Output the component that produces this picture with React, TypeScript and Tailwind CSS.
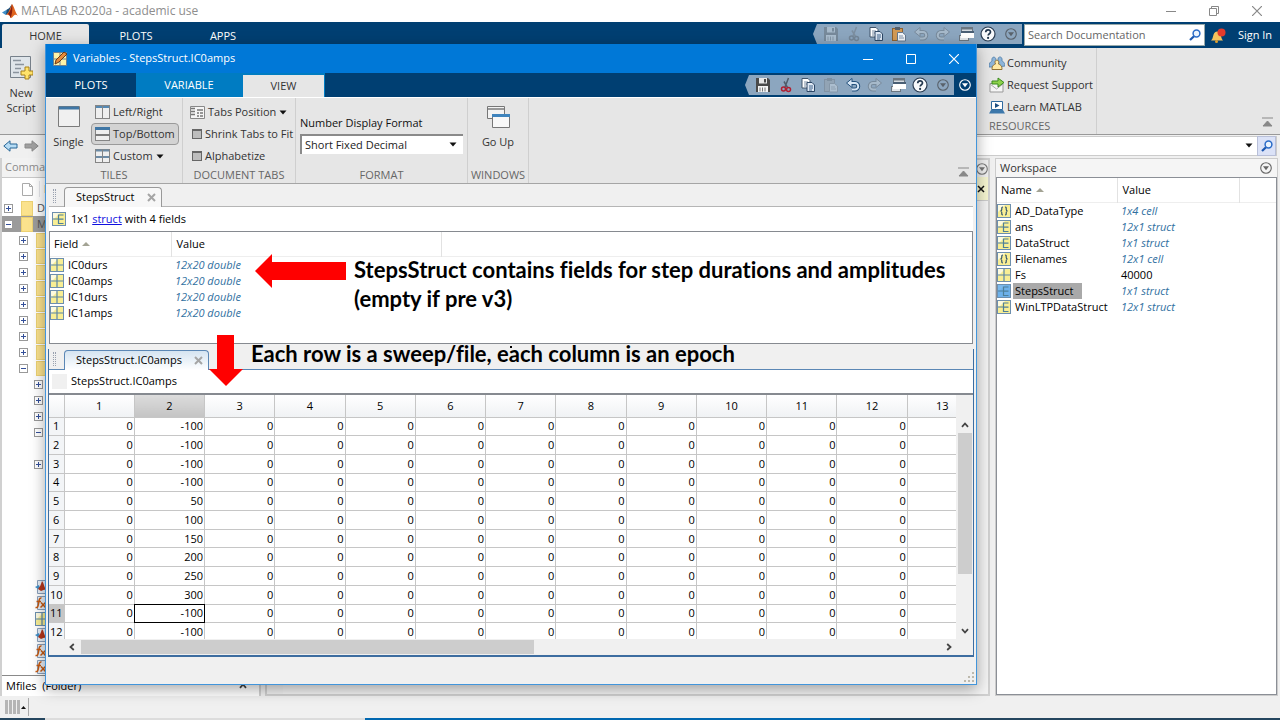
import type { ReactNode } from 'react';
import clsx from 'clsx';

type IconName = 'save' | 'cut' | 'copy' | 'paste' | 'undo' | 'redo' | 'windows' | 'help' | 'more';
type VarKind = 'cell' | 'struct' | 'matrix';

type Variable = {
  name: string;
  value: string;
  kind: VarKind;
  plain?: boolean;
  selected?: boolean;
};

const WORKSPACE: Variable[] = [
  { name: 'AD_DataType', value: '1x4 cell', kind: 'cell' },
  { name: 'ans', value: '12x1 struct', kind: 'struct' },
  { name: 'DataStruct', value: '1x1 struct', kind: 'struct' },
  { name: 'Filenames', value: '12x1 cell', kind: 'cell' },
  { name: 'Fs', value: '40000', kind: 'matrix', plain: true },
  { name: 'StepsStruct', value: '1x1 struct', kind: 'struct', selected: true },
  { name: 'WinLTPDataStruct', value: '12x1 struct', kind: 'struct' },
];

const FIELDS = ['IC0durs', 'IC0amps', 'IC1durs', 'IC1amps'];

const COLUMNS = Array.from({ length: 13 }, (_, i) => i + 1);
const AMPLITUDES = [-100, -100, -100, -100, 50, 100, 150, 200, 250, 300, -100, -100];
const ACTIVE_ROW = 11;
const ACTIVE_COLUMN = 2;
const LAST_LOADED_COLUMN = 12;

const TOOLS: { name: IconName; label: string }[] = [
  { name: 'save', label: 'Save' },
  { name: 'cut', label: 'Cut' },
  { name: 'copy', label: 'Copy' },
  { name: 'paste', label: 'Paste' },
  { name: 'undo', label: 'Undo' },
  { name: 'redo', label: 'Redo' },
  { name: 'windows', label: 'Switch windows' },
  { name: 'help', label: 'Help' },
  { name: 'more', label: 'Customize' },
];

type TreeRow = { depth: number; state: 'open' | 'closed' | 'none'; letter?: string; selected?: boolean };

const TREE: TreeRow[] = [
  { depth: 0, state: 'closed', letter: 'D' },
  { depth: 0, state: 'open', letter: 'M', selected: true },
  ...Array.from({ length: 8 }, (): TreeRow => ({ depth: 1, state: 'closed' })),
  { depth: 1, state: 'open' },
  { depth: 2, state: 'closed' },
  { depth: 2, state: 'closed' },
  { depth: 2, state: 'closed' },
  { depth: 2, state: 'open' },
  { depth: 2, state: 'none' },
  { depth: 2, state: 'closed' },
];

const FILES = ['script', 'function', 'matrix', 'script', 'function', 'function'] as const;

function MatlabLogo() {
  return (
    <svg viewBox="0 0 16 16" className="size-4">
      <path d="M0 9.500 5 6.500l2.500 2-3.700 3.500z" fill="#3f8fc9" />
      <path d="M5 6.500c2-.5 3-2.500 5-5.500L7 10l-3.200 2z" fill="#1d4f78" />
      <path d="M10 1c2 2 3 8 6 12-2-2-3.500-1.500-5 .5-1 1.200-1.700 1.500-2.500 1.500C8 12 6 11.500 4 12c3-2 4-7 6-11z" fill="#e0641f" />
      <path d="M10 1c-.6 4-1.500 7-4 10 1.500.3 2 2 2.500 4 1.500-3 2.300-9 1.500-14z" fill="#8a2010" />
    </svg>
  );
}

function ToolIcon({ name }: { name: IconName }) {
  switch (name) {
    case 'save':
      return (
        <svg viewBox="0 0 16 16" className="size-4">
          <path d="M1 1h12l2 2v12H1z" fill="#4a4a4a" />
          <rect x="4" y="1" width="8" height="5.500" fill="#e8e8e8" />
          <rect x="9" y="2" width="2" height="3.500" fill="#4a4a4a" />
          <rect x="3" y="9" width="10" height="6" fill="#f4f4f4" />
          <path d="M5 10.500v4M7.500 10.500v4M10 10.500v4" stroke="#777" />
        </svg>
      );
    case 'cut':
      return (
        <svg viewBox="0 0 16 16" className="size-4" fill="none">
          <path d="M10.500 1 7 10M6 4.500l3.500 6" stroke="#4f5d6b" strokeWidth="1.500" />
          <circle cx="5.500" cy="12" r="2" stroke="#b02032" strokeWidth="1.500" />
          <circle cx="10.500" cy="12.500" r="2" stroke="#b02032" strokeWidth="1.500" />
        </svg>
      );
    case 'copy':
      return (
        <svg viewBox="0 0 16 16" className="size-4">
          <path d="M2 1.500h6l2 2V11H2z" fill="#fff" stroke="#40546b" />
          <path d="M4 5h4M4 7h4M4 9h2" stroke="#7a8da3" />
          <path d="M7 5.500h5l2.500 2.500V14.500H7z" fill="#dfe9f5" stroke="#2c4766" />
          <path d="M9 9h4M9 11h4M9 13h3" stroke="#41648c" />
        </svg>
      );
    case 'paste':
      return (
        <svg viewBox="0 0 16 16" className="size-4">
          <rect x="1.500" y="2.500" width="10" height="12" fill="#d39a55" stroke="#8d6130" />
          <rect x="4" y="1" width="5" height="3" fill="#555f6b" />
          <path d="M6.500 6.500h5l3 2.500v6H6.500z" fill="#f3f6fa" stroke="#65788e" />
          <path d="M8 10h4M8 12h5" stroke="#8496ab" />
        </svg>
      );
    case 'undo':
    case 'redo':
      return (
        <svg viewBox="0 0 16 16" className={clsx('size-4', name === 'redo' && '-scale-x-100')} fill="none">
          <path d="M5 6h5a3 3 0 0 1 0 6.500H7" stroke="#24517c" strokeWidth="4" />
          <path d="M7 1.500 1.500 6 7 10.500z" fill="#d7e6f5" stroke="#24517c" />
          <path d="M5 6h5a3 3 0 0 1 0 6.500H7" stroke="#d7e6f5" strokeWidth="2" />
        </svg>
      );
    case 'windows':
      return (
        <svg viewBox="0 0 16 16" className="size-4">
          <rect x="3.500" y="1.500" width="11" height="9" fill="#d5dbe1" stroke="#6b7680" />
          <rect x="4" y="2" width="10" height="1.500" fill="#6b7680" />
          <rect x="1.500" y="9.500" width="9" height="5" fill="#e2e6ea" stroke="#6b7680" />
          <rect x="3" y="6" width="13" height="6" fill="#fff" />
          <path d="M3 6h13" stroke="#4a5f75" strokeWidth="2" />
        </svg>
      );
    case 'help':
      return (
        <svg viewBox="0 0 16 16" className="size-4">
          <circle cx="8" cy="8" r="7" fill="#f7f9fb" stroke="#2b3d52" strokeWidth="1.200" />
          <path d="M5.700 6.300c0-3.200 4.800-3.200 4.800-.3 0 1.800-2.300 1.700-2.300 3.600" fill="none" stroke="#21364d" strokeWidth="1.700" />
          <circle cx="8.100" cy="11.900" r="1.100" fill="#21364d" />
        </svg>
      );
    case 'more':
      return <CircleArrow color="#59626b" />;
  }
}

function CircleArrow({ color }: { color: string }) {
  return (
    <svg viewBox="0 0 12 12" className="size-3" style={{ color }}>
      <circle cx="6" cy="6" r="5.300" fill="none" stroke="currentColor" strokeWidth="1.100" />
      <path d="M3 4.300h6L6 8.300z" fill="currentColor" />
    </svg>
  );
}

function VarIcon({ kind, selected }: { kind: VarKind; selected?: boolean }) {
  return (
    <svg viewBox="0 0 14 14" className="size-[14px] shrink-0">
      <rect x="0.500" y="0.500" width="13" height="13" fill={selected ? '#6db1ea' : '#f8ee94'} stroke="#6d8fae" />
      <path d="M1 1h7L1 8z" fill="#fff" opacity={selected ? 0.1 : 0.7} />
      {kind === 'matrix' && <path d="M7 1v12M1 7h12" stroke="#5b86a6" strokeWidth="1.200" />}
      {kind === 'struct' && <path d="M1 7h5.500M11.500 3h-5v8.500h5M6.500 7.200h5" fill="none" stroke="#4d7f98" strokeWidth="1.200" />}
      {kind === 'cell' && (
        <path
          d="M6 3C4.500 3 4.800 4 4.800 5.200S4.500 7 3.300 7c1.200 0 1.500.6 1.500 1.800S4.500 11 6 11M8 3c1.500 0 1.200 1 1.200 2.200S9.500 7 10.700 7c-1.200 0-1.500.6-1.500 1.800S9.500 11 8 11"
          fill="none"
          stroke="#31566f"
          strokeWidth="1.200"
        />
      )}
    </svg>
  );
}

function TileIcon({ layout }: { layout: 'columns' | 'rows' | 'grid' }) {
  return (
    <svg viewBox="0 0 15 14" className="h-[14px] w-[15px]">
      <rect x="0.500" y="0.500" width="14" height="13" fill="#efefef" stroke="#858585" />
      {layout === 'columns' && <path d="M1 2h6M8 2h6" stroke="#5689b3" strokeWidth="2" />}
      {layout === 'rows' && <path d="M0 1.500h15" stroke="#3f76a5" strokeWidth="3" />}
      {layout === 'grid' && <path d="M1 1.500h6M8 1.500h6M1 8h6M8 8h6" stroke="#6c8ba6" strokeWidth="2" />}
      {layout !== 'rows' && <path d="M7.500 0v14" stroke="#858585" />}
      {layout === 'rows' && <path d="M0 8h15" stroke="#7b7b7b" strokeWidth="2" />}
    </svg>
  );
}

function Lens() {
  return (
    <svg viewBox="0 0 12 12" className="size-3" fill="none">
      <path d="M5 7.200 1 11" stroke="#1b57b0" strokeWidth="2.200" />
      <circle cx="7.500" cy="4.500" r="3.400" fill="#eaf3fd" stroke="#2b6cc8" strokeWidth="1.500" />
    </svg>
  );
}

function Caret() {
  return (
    <svg viewBox="0 0 8 5" className="h-[5px] w-2">
      <path d="M.5.5h7L4 4.500z" fill="#111" />
    </svg>
  );
}

function SortMark() {
  return (
    <svg viewBox="0 0 8 4" className="h-1 w-2">
      <path d="M0 4h8L4 0z" fill="#a3a394" />
    </svg>
  );
}

function CollapseIcon() {
  return (
    <svg viewBox="0 0 11 10" className="h-[10px] w-[11px]">
      <path d="M0 1h11M5.500 4 10 9H1z" fill="#888" stroke="#888" strokeWidth="1" />
    </svg>
  );
}

function Chevron({ className }: { className?: string }) {
  return (
    <svg viewBox="0 0 8 8" className={clsx('size-2', className)}>
      <path d="M1 5.800 4 2.500l3 3.300" fill="none" stroke="#444" strokeWidth="1.800" />
    </svg>
  );
}

function CloseMark() {
  return (
    <svg viewBox="0 0 9 9" className="size-[9px]">
      <path d="M1 1l7 7M8 1 1 8" stroke="#a5a5a5" strokeWidth="2" />
    </svg>
  );
}

function Grip() {
  return <span className="h-[14px] w-[3px] shrink-0 border-x border-dotted border-gray-400" />;
}

function WindowControls({ restore, className }: { restore?: boolean; className: string }) {
  return (
    <div className={clsx('flex items-center', className)}>
      <button aria-label="Minimize" className="flex w-[43px] justify-center">
        <svg viewBox="0 0 10 10" className="size-[10px]">
          <path d="M0 5.500h10" stroke="currentColor" />
        </svg>
      </button>
      <button aria-label="Maximize" className="flex w-[43px] justify-center">
        <svg viewBox="0 0 10 10" className="size-[10px]" fill="none" stroke="currentColor">
          {restore ? <path d="M.5 2.500h7v7h-7zM2.500 2.500v-2h7v7h-2" /> : <path d="M.5.5h9v9h-9z" />}
        </svg>
      </button>
      <button aria-label="Close" className="flex w-[43px] justify-center">
        <svg viewBox="0 0 10 10" className="size-[10px]">
          <path d="m0 0 10 10M10 0 0 10" stroke="currentColor" strokeWidth="1.200" />
        </svg>
      </button>
    </div>
  );
}

function QuickAccess({ disabled }: { disabled: IconName[] }) {
  return (
    <div className="flex h-5 w-[209px] items-center bg-[#8ca6bf] pl-[7px] [clip-path:polygon(4px_0,100%_0,100%_100%,4px_100%,0_50%)]">
      {TOOLS.map((tool) => (
        <button
          key={tool.name}
          aria-label={tool.label}
          disabled={disabled.includes(tool.name)}
          className="flex flex-1 justify-center disabled:opacity-30 disabled:grayscale"
        >
          <ToolIcon name={tool.name} />
        </button>
      ))}
    </div>
  );
}

function RibbonSection({ title, className, children }: { title: string; className: string; children: ReactNode }) {
  return (
    <section className={clsx('flex flex-col border-r border-[#cfcfcf] pt-[3px]', className)}>
      <div className="flex h-[67px]">{children}</div>
      <h2 className="text-center text-[11px] leading-4 text-[#666]">{title}</h2>
    </section>
  );
}

function DocumentTab({ title, active }: { title: string; active?: boolean }) {
  return (
    <div className={clsx('flex h-[21px] shrink-0 items-end border-b pl-1', active ? 'border-[#5b87b5]' : 'border-[#b5b5b5]')}>
      <div className="flex h-5 w-[11px] items-center">
        <Grip />
      </div>
      <div
        className={clsx(
          '-mb-px flex h-5 items-center gap-3 rounded-t border border-b-0 pr-[5px] pl-[11px]',
          active ? 'border-[#5b87b5] bg-linear-to-b from-[#d5e4f1] to-white' : 'border-[#999] bg-[#f7f7f7]',
        )}
      >
        <span>{title}</span>
        <button aria-label={`Close ${title}`}>
          <CloseMark />
        </button>
      </div>
    </div>
  );
}

function Expander({ open }: { open: boolean }) {
  return (
    <svg viewBox="0 0 9 9" className="size-[9px] shrink-0">
      <rect x="0.500" y="0.500" width="8" height="8" fill="#fff" stroke="#999" />
      <path d={open ? 'M2 4.500h5' : 'M2 4.500h5M4.500 2v5'} stroke="#34509a" />
    </svg>
  );
}

function FileIcon({ kind }: { kind: (typeof FILES)[number] }) {
  if (kind === 'matrix') return <VarIcon kind="matrix" />;
  return (
    <svg viewBox="0 0 14 14" className="size-[14px] shrink-0">
      <path d="M2.500.5h9v13h-9z" fill="#e6eef7" stroke="#8aa0bb" />
      {kind === 'script' ? (
        <>
          <path d="m0 7 4-2 1 3-2 1z" fill="#3f8fc9" />
          <path d="M7 1c2 2 2 6 4 9-3-1-4 1-5 1L3 9c2-2 3-5 4-8z" fill="#b5361b" />
        </>
      ) : (
        <path d="M6.500 2C4 1.500 4 5 3.500 8S2.500 12 .5 11.500M1.500 5.500h4.500M6 6.500l4.500 5M10.500 6.500 5.500 11.500" fill="none" stroke="#c65a11" strokeWidth="1.500" />
      )}
    </svg>
  );
}

function CurrentFolder() {
  return (
    <aside className="flex w-[261px] flex-col border-x-2 border-[#d0d0d0] bg-white">
      <h2 className="h-[19px] bg-[#f2f2f2] pl-[3px] leading-[17px] text-[#8c8c8c]">Command History</h2>
      <div className="flex h-[23px] items-center border-t border-[#c8c8c8] pl-5">
        <svg viewBox="0 0 11 13" className="h-[13px] w-[11px]">
          <path d="M.5.5h7l3 3v9H.5zM7.500.5v3h3" fill="#fff" stroke="#aaa" />
        </svg>
        <span className="ml-[6px] border-l border-gray-200 pl-1 text-black">Name</span>
      </div>
      <ul>
        {TREE.map((row, i) => (
          <li
            key={i}
            className={clsx(
              'flex h-4 items-center',
              row.selected && 'bg-[#9b9b9b]',
              row.depth === 0 && 'pl-[2px]',
              row.depth === 1 && 'pl-[17px]',
              row.depth === 2 && 'pl-8',
            )}
          >
            {row.state !== 'none' && <Expander open={row.state === 'open'} />}
            {row.depth < 2 && <span className="ml-2 h-[15px] w-3 border border-[#ecd173] bg-[#fbe28d]" />}
            <span className="ml-1 text-[#555]">{row.letter}</span>
          </li>
        ))}
      </ul>
      <ul className="mt-auto pl-[33px]">
        {FILES.map((kind, i) => (
          <li key={i} className="flex h-4 items-center">
            <FileIcon kind={kind} />
          </li>
        ))}
      </ul>
      <div className="flex h-[21px] items-center justify-between border-t border-[#8a8a8a] pr-3 pl-1 text-black">
        <span>Mfiles&nbsp; (Folder)</span>
        <Chevron />
      </div>
    </aside>
  );
}

function Workspace() {
  return (
    <section className="flex w-[283px] flex-col border border-[#ccc] bg-[#f5f5f5]">
      <header className="flex h-[18px] items-center justify-between pr-[5px] pl-1">
        <h2>Workspace</h2>
        <button aria-label="Workspace actions">
          <CircleArrow color="#666" />
        </button>
      </header>
      <div className="flex-1 border border-[#8b8f96] bg-white">
        <table className="w-full table-fixed text-left">
          <thead>
            <tr className="h-6 border-b border-[#eee] text-black">
              <th className="w-[120px] border-r border-[#e2e2e2] pl-1 font-normal">
                <span className="flex items-center gap-1">
                  Name <SortMark />
                </span>
              </th>
              <th className="w-[122px] border-r border-[#e2e2e2] pl-[5px] font-normal">Value</th>
              <th aria-label="More" />
            </tr>
          </thead>
          <tbody>
            {WORKSPACE.map((item) => (
              <tr key={item.name} className="h-4 leading-4 text-black">
                <td>
                  <span className="flex h-4 items-center gap-[2px]">
                    <VarIcon kind={item.kind} selected={item.selected} />
                    <span className={clsx('h-4 pl-[2px]', item.selected && 'bg-[#a9a9a9] pr-2')}>{item.name}</span>
                  </span>
                </td>
                <td className={clsx('pl-1', !item.plain && 'text-[#31709f] italic')}>{item.value}</td>
                <td />
              </tr>
            ))}
          </tbody>
        </table>
      </div>
    </section>
  );
}

function MainWindow() {
  return (
    <div className="flex h-full flex-col">
      <header className="flex h-[22px] shrink-0 items-center bg-white pl-[2px] text-[#8e8e8e]">
        <MatlabLogo />
        <h1 className="ml-[3px] text-[12px]">MATLAB R2020a - academic use</h1>
        <WindowControls restore className="ml-auto pr-[2px] text-[#888]" />
      </header>

      <nav className="flex h-[26px] shrink-0 bg-[#003f72] pt-[2px] pl-[2px] text-white">
        <button className="h-6 w-[87px] rounded-t-xs bg-[#e6e6e6] text-[#333]">HOME</button>
        <button className="h-6 w-[94px]">PLOTS</button>
        <button className="h-6 w-[80px]">APPS</button>
        <div className="ml-auto flex">
          <QuickAccess disabled={['save', 'cut', 'undo', 'redo']} />
          <label className="ml-[2px] flex h-[22px] w-[181px] items-center border border-[#9aa] bg-white pr-[3px] pl-[3px]">
            <input
              type="text"
              aria-label="Search Documentation"
              placeholder="Search Documentation"
              className="min-w-0 flex-1 outline-none placeholder:text-[#666]"
            />
            <Lens />
          </label>
          <button aria-label="Notifications" className="ml-[5px]">
            <svg viewBox="0 0 16 16" className="size-4">
              <path d="M1 12.500c3-2 1-8 6-9 5 0 3 6 6 9z" fill="#f6c35c" />
              <circle cx="6.500" cy="13.500" r="1.500" fill="#e0a030" />
              <circle cx="11.500" cy="4.500" r="4" fill="#e33b2c" />
            </svg>
          </button>
          <button className="h-[22px] w-[54px] pl-1">Sign In</button>
        </div>
      </nav>

      <div className="flex h-[87px] shrink-0 border-b border-[#999] bg-[#e6e6e6]">
        <button className="flex w-[42px] flex-col items-center pt-2 leading-[15px]">
          <svg viewBox="0 0 24 24" className="mb-[5px] size-6">
            <path d="M1.500.5h20v21h-20z" fill="#dfe5ea" stroke="#77818b" />
            <path d="M4 4.500h8M6 8.500h9M6 12.500h6M4 16.500h6" stroke="#8a949e" strokeWidth="1.500" />
            <path d="M16 11h4v4h4v4h-4v4h-4v-4h-4v-4h4z" fill="#ffe36b" stroke="#a8801a" />
          </svg>
          <span>
            New
            <br />
            Script
          </span>
        </button>
        <section className="ml-auto w-[111px] border-r border-[#cfcfcf] pt-1 pl-[3px] whitespace-nowrap">
          <button className="flex h-[22px] items-center gap-[2px]">
            <svg viewBox="0 0 16 16" className="size-4">
              <path d="M0 12c0-5 2-5 3-6-1-5 4-5 4-1l3 7zM16 11c0-4-2-4-3-5 1-5-4-5-4-2L9 12z" fill="#8db4d9" stroke="#4d7ba6" strokeWidth=".8" />
              <path d="M3 14.500c0-4 1.500-4.500 3.500-5.500-2.500-5 5-5 3 0 2 1 3.500 1.500 3.500 5.500z" fill="#ffe9a5" stroke="#927234" />
            </svg>
            Community
          </button>
          <button className="flex h-[22px] items-center gap-[2px]">
            <svg viewBox="0 0 16 16" className="size-4">
              <path d="M1 6.500h13v8.500H1z" fill="#f6f6f6" stroke="#999" />
              <path d="m1 7 6.500 5L14 7" fill="none" stroke="#aaa" />
              <path d="M3 4h6V1l6 4.500L9 10V7H3z" fill="#8ed24b" stroke="#3a8a1e" />
            </svg>
            Request Support
          </button>
          <button className="flex h-[22px] items-center gap-[2px]">
            <svg viewBox="0 0 16 16" className="size-4">
              <path d="M2.500 2.500h11v8h-11z" fill="#fff" stroke="#2f6a9e" />
              <path d="M6 4v5l4.500-2.500z" fill="#1d4f80" />
              <path d="M2 11h12l2 3.500H0z" fill="#3d78ab" />
            </svg>
            Learn MATLAB
          </button>
          <h2 className="leading-4 text-[#666]">RESOURCES</h2>
        </section>
        <div className="flex w-[183px] items-end justify-end pr-[7px] pb-[7px]">
          <button aria-label="Collapse toolstrip">
            <CollapseIcon />
          </button>
        </div>
      </div>

      <div className="flex h-[21px] shrink-0 items-center gap-[6px] pr-[3px] pl-[3px]">
        <button aria-label="Back">
          <svg viewBox="0 0 15 12" className="h-3 w-[15px]">
            <path d="M.8 6 7 .8V4h7v4H7v3.200z" fill="#b6dcf5" stroke="#276595" />
          </svg>
        </button>
        <button aria-label="Forward">
          <svg viewBox="0 0 15 12" className="h-3 w-[15px]">
            <path d="M14.200 6 8 .8V4H1v4h7v3.200z" fill="#a0a0a0" stroke="#8a8a8a" />
          </svg>
        </button>
        <div className="flex h-5 flex-1 items-center justify-end border border-[#ccc] bg-white">
          <input type="text" aria-label="Current folder" className="min-w-0 flex-1 outline-none" />
          <Caret />
          <button aria-label="Search folder" className="ml-1 flex h-5 w-[19px] items-center justify-center border border-[#b8bfd8] bg-[#dbe2f7]">
            <Lens />
          </button>
        </div>
      </div>

      <main className="flex min-h-0 flex-1 pt-[2px] pr-[2px]">
        <CurrentFolder />
        <section className="mr-[5px] ml-1 flex flex-1 flex-col border-2 border-[#d0d0d0] bg-[#f0f0f0]">
          <header className="flex h-[17px] items-center justify-end">
            <CircleArrow color="#777" />
          </header>
          <div className="flex h-6 items-center justify-end border-b border-[#ccc] bg-[#f5f5d0] pr-[3px]">
            <button aria-label="Dismiss message">
              <svg viewBox="0 0 8 8" className="size-2">
                <path d="m1 1 6 6M7 1 1 7" stroke="#111" strokeWidth="1.500" />
              </svg>
            </button>
          </div>
          <div className="ml-4 flex-1 bg-[#f3f3f3]" />
        </section>
        <Workspace />
      </main>

      <footer className="flex h-6 shrink-0 flex-col">
        <div className="flex flex-1 items-center pl-[5px]">
          <span className="flex gap-px">
            {[0, 1, 2, 3].map((bar) => (
              <span key={bar} className="h-[14px] w-[3px] bg-[#b5b5b5]" />
            ))}
          </span>
          <span className="ml-px flex h-[18px] w-2 items-center border-r border-[#aaa]">
            <svg viewBox="0 0 5 3" className="h-[3px] w-[5px]">
              <path d="M0 3h5L2.500 0z" fill="#111" />
            </svg>
          </span>
        </div>
        <div className="flex h-[2px] bg-[#25465f]">
          <span className="w-[45px]" />
          <span className="w-[320px] bg-[#dcdcdc]" />
          <span className="w-[505px] bg-[#0067b0]" />
        </div>
      </footer>
    </div>
  );
}

function ViewRibbon() {
  return (
    <div className="flex h-[87px] shrink-0 border-t border-b border-t-white border-b-[#a5a5a5] bg-[#e6e6e6]">
      <RibbonSection title="TILES" className="w-[137px]">
        <button className="flex w-[45px] flex-col items-center gap-[7px] pt-[5px]">
          <svg viewBox="0 0 22 21" className="h-[21px] w-[22px]">
            <path d="M.5.5h21v20H.5z" fill="#f0f0f0" stroke="#7b7b7b" />
            <path d="M1 2h20" stroke="#3f76a5" strokeWidth="3" />
          </svg>
          Single
        </button>
        <div className="flex flex-col">
          <button className="flex h-[22px] items-center gap-[3px] px-1">
            <TileIcon layout="columns" /> Left/Right
          </button>
          <button className="flex h-[22px] items-center gap-[3px] rounded border border-[#9a9a9a] bg-[#d3d3d3] px-[3px]">
            <TileIcon layout="rows" /> Top/Bottom
          </button>
          <button className="flex h-[22px] items-center gap-[3px] px-1">
            <TileIcon layout="grid" /> Custom <Caret />
          </button>
        </div>
      </RibbonSection>
      <RibbonSection title="DOCUMENT TABS" className="w-[113px]">
        <div className="flex flex-col pl-[7px] whitespace-nowrap">
          <button className="flex h-[22px] items-center gap-[3px]">
            <svg viewBox="0 0 15 13" className="h-[13px] w-[15px]">
              <path d="M.5.5h14v12H.5z" fill="#f5f5f5" stroke="#888" />
              <path d="M1 2.500h4M1 5.500h4M1 8.500h4M7 4h6M7 7h2M10 7h3M7 10h2M10 10h3" stroke="#777" strokeWidth="1.500" />
            </svg>
            Tabs Position <Caret />
          </button>
          {['Shrink Tabs to Fit', 'Alphabetize'].map((option) => (
            <label key={option} className="flex h-[22px] items-center gap-[3px] pl-[2px]">
              <input type="checkbox" className="size-[10px] appearance-none border border-t-2 border-[#666] bg-[#bdbdbd]" />
              {option}
            </label>
          ))}
        </div>
      </RibbonSection>
      <RibbonSection title="FORMAT" className="w-[172px]">
        <div className="flex w-full flex-col gap-[3px] px-1 pt-[14px] text-[#111]">
          <label htmlFor="number-format" className="leading-4">
            Number Display Format
          </label>
          <div className="relative">
            <select
              id="number-format"
              className="h-5 w-full appearance-none border-t-2 border-l-2 border-[#8a8a8a] bg-white pl-[3px] text-[#222]"
            >
              <option>Short Fixed Decimal</option>
            </select>
            <span className="pointer-events-none absolute top-2 right-[6px]">
              <Caret />
            </span>
          </div>
        </div>
      </RibbonSection>
      <RibbonSection title="WINDOWS" className="w-[61px]">
        <button className="flex w-full flex-col items-center gap-[6px] pt-[5px]">
          <svg viewBox="0 0 24 22" className="h-[22px] w-6">
            <path d="M1.500.5h17v12h-17z" fill="#f3f3f3" stroke="#777" />
            <path d="M2 3h16" stroke="#999" strokeWidth="2" />
            <path d="M6.500 8.500h17v13h-17z" fill="#f8f8f8" stroke="#777" />
            <path d="M6 9.500h18" stroke="#3f84bd" strokeWidth="3" />
          </svg>
          Go Up
        </button>
      </RibbonSection>
      <div className="ml-auto flex items-end pr-[7px] pb-[6px]">
        <button aria-label="Collapse toolstrip">
          <CollapseIcon />
        </button>
      </div>
    </div>
  );
}

function StructPanel() {
  return (
    <section className="mx-[3px] mt-[2px] flex h-[158px] shrink-0 flex-col text-black">
      <DocumentTab title="StepsStruct" />
      <p className="flex h-6 items-center gap-[5px] bg-white pl-[3px]">
        <VarIcon kind="struct" />
        <span>
          1x1{' '}
          <a href="#struct" className="text-[#1010e0] underline">
            struct
          </a>{' '}
          with 4 fields
        </span>
      </p>
      <div className="flex-1 border border-[#868a90] bg-white">
        <table className="w-full table-fixed text-left">
          <thead>
            <tr className="h-6 border-b border-[#eee]">
              <th className="w-[121px] border-r border-[#e2e2e2] pl-1 font-normal">
                <span className="flex items-center gap-1">
                  Field <SortMark />
                </span>
              </th>
              <th className="w-[270px] border-r border-[#e2e2e2] pl-[5px] font-normal">Value</th>
              <th aria-label="More" />
            </tr>
          </thead>
          <tbody>
            {FIELDS.map((field) => (
              <tr key={field} className="h-4 leading-4">
                <td>
                  <span className="flex items-center gap-1">
                    <VarIcon kind="matrix" />
                    {field}
                  </span>
                </td>
                <td className="pl-1 text-[#31709f] italic">12x20 double</td>
                <td />
              </tr>
            ))}
          </tbody>
        </table>
      </div>
    </section>
  );
}

function ValueGrid() {
  return (
    <table className="h-[247px] w-[929px] table-fixed border-collapse text-right text-[11px]">
      <thead>
        <tr className="h-[22px] bg-linear-to-b from-white to-[#f0f2f4] text-center">
          <th className="w-[15px] border-r border-b border-[#c6c6c6]" aria-label="Row" />
          {COLUMNS.map((column) => (
            <th
              key={column}
              className={clsx(
                'border-r border-b border-[#c6c6c6] p-0 font-normal',
                column === ACTIVE_COLUMN && 'bg-linear-to-b from-[#dcdcdc] to-[#c4c4c4]',
              )}
            >
              {column}
            </th>
          ))}
        </tr>
      </thead>
      <tbody>
        {AMPLITUDES.map((amplitude, i) => (
          <tr key={i} className="leading-4">
            <th
              className={clsx(
                'border-r border-b border-[#c6c6c6] p-0 text-center font-normal',
                i + 1 === ACTIVE_ROW ? 'bg-[#c6c6c6]' : 'bg-[#f3f5f7]',
              )}
            >
              {i + 1}
            </th>
            {COLUMNS.map((column) => (
              <td
                key={column}
                className={clsx(
                  'border-r border-b border-[#c6c6c6] p-0 pr-px',
                  i + 1 === ACTIVE_ROW && column === ACTIVE_COLUMN && 'outline -outline-offset-1 outline-black',
                )}
              >
                {column === ACTIVE_COLUMN ? amplitude : column <= LAST_LOADED_COLUMN && 0}
              </td>
            ))}
          </tr>
        ))}
      </tbody>
    </table>
  );
}

function MatrixPanel() {
  return (
    <section className="mx-[2px] mt-[5px] mb-[27px] flex min-h-0 flex-1 flex-col border-x border-b border-x-[#3d6da0] border-b-[#3d6da0] text-black">
      <DocumentTab title="StepsStruct.IC0amps" active />
      <p className="flex h-[23px] shrink-0 items-center gap-[4px] bg-white pl-[3px]">
        <span className="size-[15px] bg-[#f0f0f0]" />
        StepsStruct.IC0amps
      </p>
      <div className="flex min-h-0 flex-1 flex-col border-t-2 border-b border-t-[#868a90] border-b-[#3d6da0] bg-[#f0f0f0]">
        <div className="flex min-h-0 flex-1">
          <div className="min-w-0 flex-1 overflow-hidden bg-white">
            <ValueGrid />
          </div>
          <div className="flex w-[17px] flex-col items-center pt-[26px] pb-1">
            <Chevron />
            <span className="mt-1 h-[141px] w-[14px] bg-[#cdcdcd]" />
            <Chevron className="mt-auto rotate-180" />
          </div>
        </div>
        <div className="flex h-4 shrink-0 items-center pr-5 pl-[19px]">
          <Chevron className="-rotate-90" />
          <span className="ml-[5px] h-[14px] w-[453px] bg-[#cdcdcd]" />
          <Chevron className="ml-auto rotate-90" />
        </div>
      </div>
    </section>
  );
}

function VariablesWindow() {
  return (
    <div className="absolute top-[44px] right-[303px] bottom-[35px] left-[45px] flex flex-col border border-t-0 border-[#4295db] bg-[#f0f0f0] shadow-[0_4px_14px_rgba(0,0,0,0.35)]">
      <header className="flex h-[29px] shrink-0 items-center bg-[#0078d7] pl-[7px] text-white">
        <svg viewBox="0 0 15 15" className="size-[15px]">
          <path d="M.5 1.500h13v13H.5z" fill="#fdf3a8" stroke="#6d8090" />
          <path d="M7 2v12M1 8h13" stroke="#6d8090" />
          <path d="m2 13 1-4 8-8 3 2-8 8z" fill="#e58b3b" stroke="#6b3a14" />
        </svg>
        <h2 className="ml-[5px]">Variables - StepsStruct.IC0amps</h2>
        <WindowControls className="ml-auto pr-px" />
      </header>
      <nav className="flex h-6 shrink-0 bg-[#003f72] text-white">
        <button className="w-[90px]">PLOTS</button>
        <button className="w-[106px] bg-[#007cc2]">VARIABLE</button>
        <button className="w-[83px] border-x border-t-2 border-[#007cc2] bg-[#e6e6e6] text-[#333]">VIEW</button>
        <div className="ml-auto flex items-center">
          <QuickAccess disabled={['paste', 'redo']} />
          <button aria-label="Window actions" className="flex w-[22px] justify-center">
            <CircleArrow color="#fff" />
          </button>
        </div>
      </nav>
      <ViewRibbon />
      <StructPanel />
      <MatrixPanel />
      <svg viewBox="0 0 10 10" className="absolute right-[2px] bottom-[2px] size-[10px]">
        <path d="M8 0h2v2H8zM4 4h2v2H4zM8 4h2v2H8zM0 8h2v2H0zM4 8h2v2H4zM8 8h2v2H8z" fill="#bdb9ad" />
      </svg>
    </div>
  );
}

function Annotations() {
  return (
    <div className="pointer-events-none absolute inset-0 font-['Lato',sans-serif] text-[22px] leading-[29px] font-bold text-black">
      <svg viewBox="0 0 91 34" className="absolute top-[254px] left-[255px] h-[34px] w-[91px]">
        <path d="M0 17 17 0v8h74v18H17v8z" fill="#f00" />
      </svg>
      <p className="absolute top-[255px] left-[354px] whitespace-nowrap [font-variant-ligatures:none]">
        StepsStruct contains fields for step durations and amplitudes
        <br />
        (empty if pre v3)
      </p>
      <svg viewBox="0 0 34 51" className="absolute top-[335px] left-[209px] h-[51px] w-[34px]">
        <path d="M8 0h17v34h9L17 51 0 34h8z" fill="#f00" />
      </svg>
      <p className="absolute top-[339px] left-[251px] whitespace-nowrap [font-variant-ligatures:none]">
        Each row is a sweep/file, each column is an epoch
      </p>
      <span className="absolute top-[346px] left-[510px] size-[2px] bg-black" />
    </div>
  );
}

export default function App() {
  return (
    <div className="relative h-screen overflow-hidden bg-[#f0f0f0] font-['Open_Sans','Noto_Sans',sans-serif] text-[11px] text-[#333]">
      <MainWindow />
      <VariablesWindow />
      <Annotations />
    </div>
  );
}
